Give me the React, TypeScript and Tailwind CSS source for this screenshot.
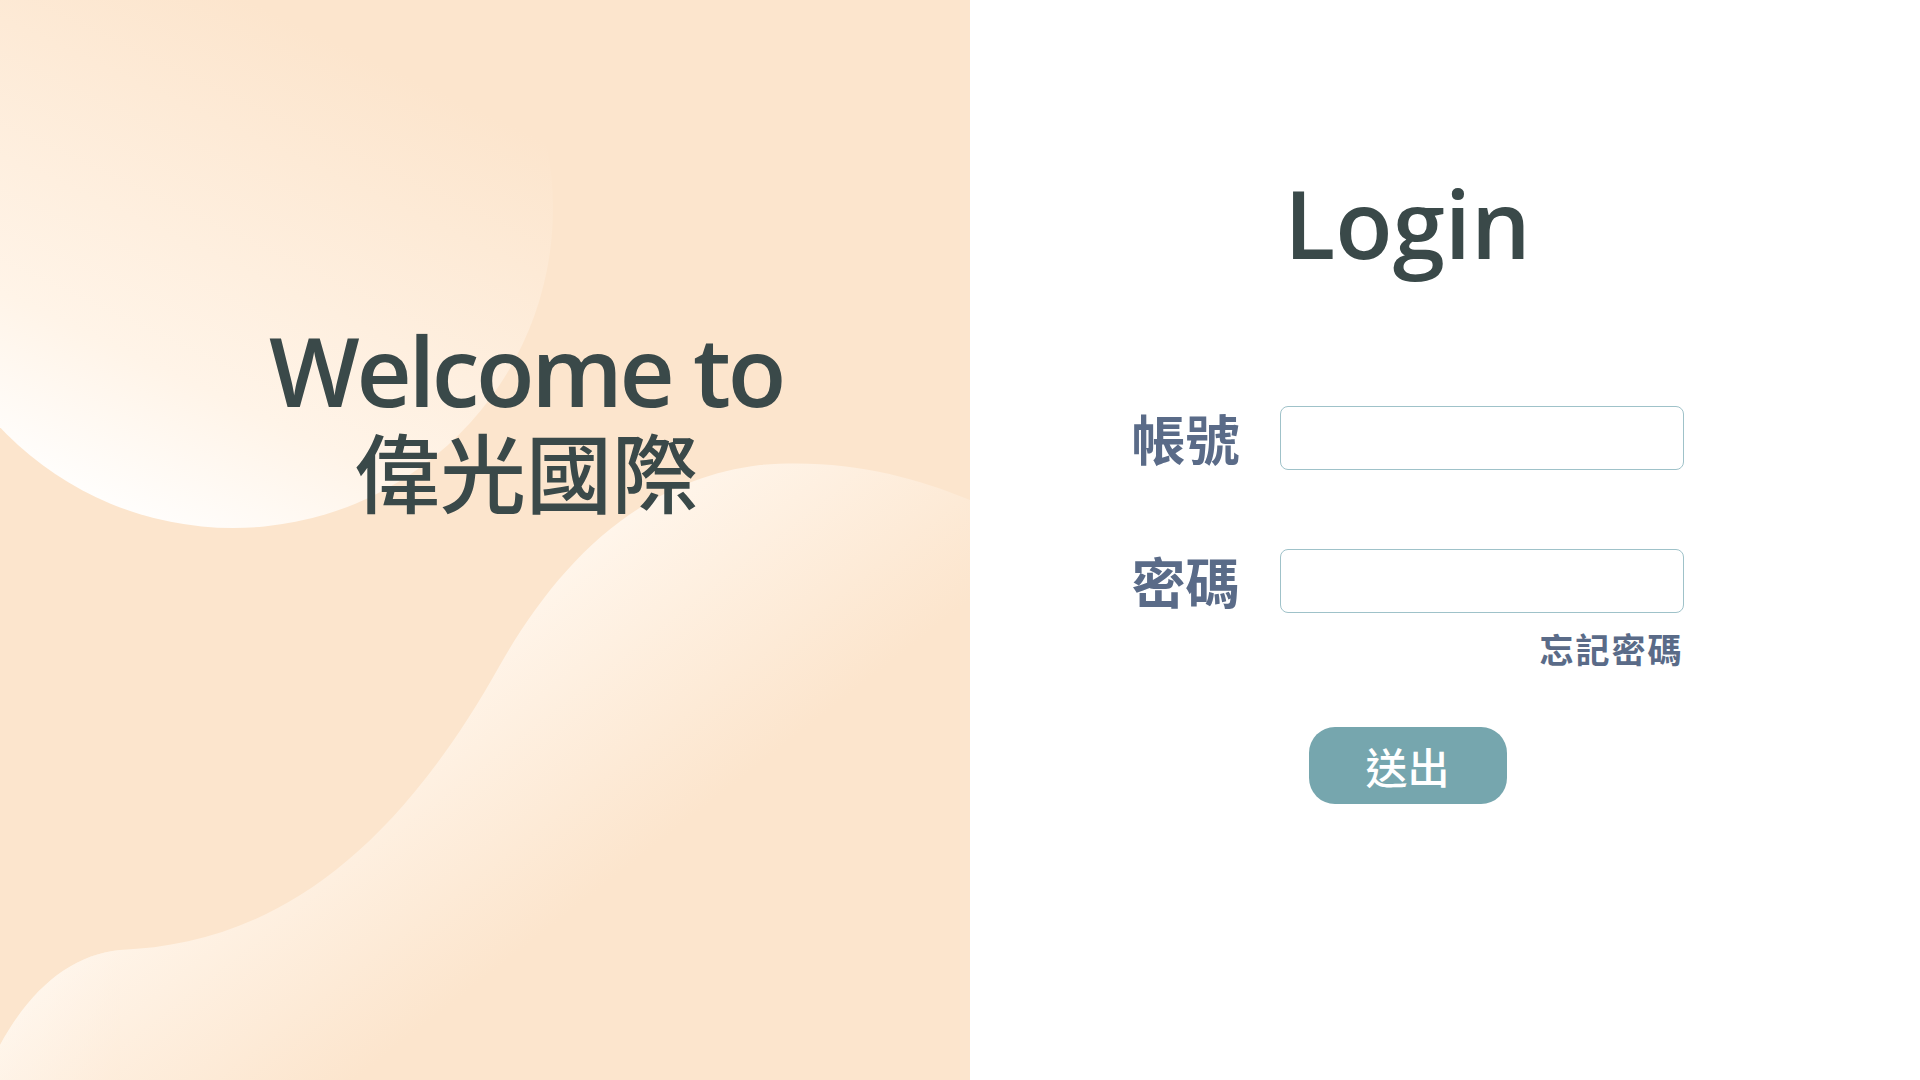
import { useState } from 'react';

const latin = { fontFamily: '"Open Sans", "Noto Sans CJK TC", sans-serif' };
const cjk = { fontFamily: '"Noto Sans CJK TC", "Noto Sans", sans-serif' };

function Backdrop() {
  return (
    <svg
      className="absolute inset-0 h-full w-full"
      viewBox="0 0 970 1080"
      preserveAspectRatio="none"
    >
      <defs>
        <linearGradient id="blob" x1="0.3" y1="1" x2="0.75" y2="0.05">
          <stop offset="0" stopColor="#ffffff" />
          <stop offset="0.25" stopColor="#fff4e8" />
          <stop offset="0.8" stopColor="#fce5cd" />
        </linearGradient>
        <linearGradient id="wave" gradientUnits="userSpaceOnUse" x1="440" y1="580" x2="650" y2="850">
          <stop offset="0" stopColor="#fffefc" />
          <stop offset="0.2" stopColor="#fff5ea" />
          <stop offset="1" stopColor="#fce5cd" />
        </linearGradient>
        <linearGradient id="hump" gradientUnits="userSpaceOnUse" x1="40" y1="960" x2="200" y2="1080">
          <stop offset="0" stopColor="#fff8f0" />
          <stop offset="1" stopColor="#fce5cd" />
        </linearGradient>
      </defs>
      <circle cx="233" cy="208" r="320" fill="url(#blob)" />
      <path
        d="M0 1045 C30 990 70 955 120 950 C250 945 380 880 500 665 C560 560 640 480 760 465 C840 458 910 475 970 500 L970 1080 L0 1080 Z"
        fill="url(#wave)"
      />
      <path d="M0 1045 C30 990 70 955 120 950 L120 1080 L0 1080 Z" fill="url(#hump)" opacity="0.6" />
    </svg>
  );
}

export default function App() {
  const [account, setAccount] = useState('');
  const [password, setPassword] = useState('');

  return (
    <div className="flex h-[1080px] w-[1920px] overflow-hidden bg-white">
      <section className="relative h-full w-[970px] shrink-0 overflow-hidden bg-[#fce5cd]">
        <Backdrop />
        <div className="relative flex flex-col items-center pl-[82px] pt-[320px] text-[#3a4949]">
          <h2 style={latin} className="text-[96px] font-semibold leading-[100px] tracking-[-0.035em]">
            Welcome to
          </h2>
          <h2 style={cjk} className="text-[86px] font-medium leading-[100px]">
            偉光國際
          </h2>
        </div>
      </section>

      <section className="flex flex-1 flex-col items-center pr-[75px] pt-[168px]">
        <h1 style={latin} className="text-[94px] font-semibold leading-[110px] text-[#3a4949]">
          Login
        </h1>

        <form
          className="mt-[128px] flex flex-col"
          onSubmit={(e) => e.preventDefault()}
        >
          <div className="grid grid-cols-[108px_404px] items-center gap-x-[40px] gap-y-[79px]">
            <label style={cjk} className="text-[54px] font-bold leading-[64px] text-[#5a6b88]">
              帳號
            </label>
            <input
              value={account}
              onChange={(e) => setAccount(e.target.value)}
              className="h-[64px] rounded-[8px] border-[1.5px] border-[#9fc2c9] px-4 text-2xl outline-none"
            />
            <label style={cjk} className="text-[54px] font-bold leading-[64px] text-[#5a6b88]">
              密碼
            </label>
            <input
              type="password"
              value={password}
              onChange={(e) => setPassword(e.target.value)}
              className="h-[64px] rounded-[8px] border-[1.5px] border-[#9fc2c9] px-4 text-2xl outline-none"
            />
          </div>
          <a
            href="#"
            style={cjk}
            className="mt-[16px] self-end text-[34px] font-bold leading-[40px] tracking-[2px] text-[#5a6b88]"
          >
            忘記密碼
          </a>
          <button
            type="submit"
            style={cjk}
            className="mt-[58px] h-[77px] w-[198px] self-center rounded-[26px] bg-[#76a6ae] text-[42px] font-medium leading-none text-white"
          >
            送出
          </button>
        </form>
      </section>
    </div>
  );
}
